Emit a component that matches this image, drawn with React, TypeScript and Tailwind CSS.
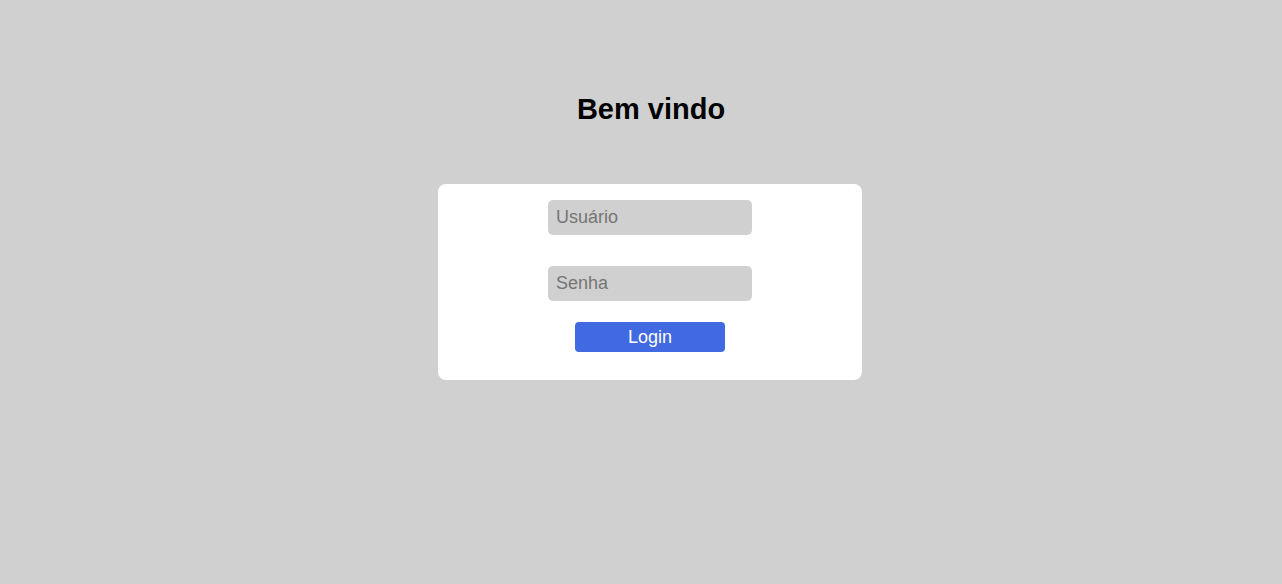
export default function App() {
  return (
    <div className="min-h-screen bg-[#d0d0d0] flex flex-col items-center pl-[18px] pt-[93px] font-['Liberation_Sans',Arial,sans-serif]">
      <h1 className="ml-[2px] text-[29px] leading-[33px] font-bold text-black">Bem vindo</h1>

      <form
        className="mt-[58px] w-[424px] bg-white rounded-lg pt-4 pb-7 flex flex-col items-center"
        onSubmit={(e) => e.preventDefault()}
      >
        <input
          type="text"
          placeholder="Usuário"
          className="w-[204px] h-[35px] rounded-[5px] bg-[#d0d0d0] px-2 text-[18px] text-black placeholder:text-[#757575] outline-none"
        />
        <input
          type="password"
          placeholder="Senha"
          className="mt-[31px] w-[204px] h-[35px] rounded-[5px] bg-[#d0d0d0] px-2 text-[18px] text-black placeholder:text-[#757575] outline-none"
        />
        <button
          type="submit"
          className="mt-[21px] w-[150px] h-[30px] rounded-[4px] bg-[#4169e1] text-white text-[18px] leading-none"
        >
          Login
        </button>
      </form>
    </div>
  );
}
